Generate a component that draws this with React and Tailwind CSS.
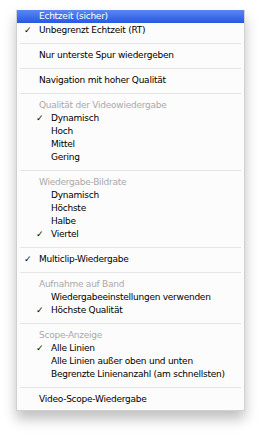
import React from 'react';

const sections = [
  {
    items: [
      { label: 'Echtzeit (sicher)', active: true },
      { label: 'Unbegrenzt Echtzeit (RT)', checked: true, gap: true },
    ],
  },
  { items: [{ label: 'Nur unterste Spur wiedergeben' }] },
  { items: [{ label: 'Navigation mit hoher Qualität' }] },
  {
    title: 'Qualität der Videowiedergabe',
    items: [
      { label: 'Dynamisch', checked: true },
      { label: 'Hoch' },
      { label: 'Mittel' },
      { label: 'Gering' },
    ],
  },
  {
    title: 'Wiedergabe-Bildrate',
    items: [
      { label: 'Dynamisch' },
      { label: 'Höchste' },
      { label: 'Halbe' },
      { label: 'Viertel', checked: true },
    ],
  },
  { items: [{ label: 'Multiclip-Wiedergabe', checked: true }] },
  {
    title: 'Aufnahme auf Band',
    items: [
      { label: 'Wiedergabeeinstellungen verwenden' },
      { label: 'Höchste Qualität', checked: true },
    ],
  },
  {
    title: 'Scope-Anzeige',
    items: [
      { label: 'Alle Linien', checked: true },
      { label: 'Alle Linien außer oben und unten' },
      { label: 'Begrenzte Linienanzahl (am schnellsten)' },
    ],
  },
  { items: [{ label: 'Video-Scope-Wiedergabe' }] },
];

const MenuItem = ({ item, indent }) => {
  const rowClass = item.active
    ? 'bg-gradient-to-b from-[#5b86f2] to-[#2658e3] text-white'
    : 'text-black';
  return (
    <div className={`relative flex h-[13px] items-center ${item.gap ? 'mt-[1px]' : ''} ${rowClass}`}>
      {item.checked && (
        <span className={`absolute top-0 flex h-[13px] items-center text-[9px] ${indent ? 'left-[19px]' : 'left-[7px]'}`}>
          ✓
        </span>
      )}
      <span className={indent ? 'pl-[34px]' : 'pl-[22px]'}>{item.label}</span>
    </div>
  );
};

const Separator = () => (
  <div className="flex h-[12px] items-center px-[3px]">
    <div className="h-px w-full bg-[#e5e5e5]" />
  </div>
);

export default function App() {
  return (
    <div className="h-[437px] w-[262px] bg-white">
      <div
        className="ml-[16px] mt-[10px] w-[229px] border-x border-b border-[#d0d0d0] bg-[#fcfcfc] pb-[4px] text-[9px] leading-[13px] tracking-[-0.25px] shadow-[0_8px_12px_rgba(0,0,0,0.25)]"
        style={{ fontFamily: '"DejaVu Sans", "Lucida Grande", sans-serif' }}
      >
        {sections.map((section, i) => (
          <div key={i}>
            {i > 0 && <Separator />}
            {section.title && (
              <div className="flex h-[13px] items-center pl-[22px] text-[#a9a9a9]">{section.title}</div>
            )}
            {section.items.map((item, j) => (
              <MenuItem key={j} item={item} indent={!!section.title} />
            ))}
          </div>
        ))}
      </div>
    </div>
  );
}
